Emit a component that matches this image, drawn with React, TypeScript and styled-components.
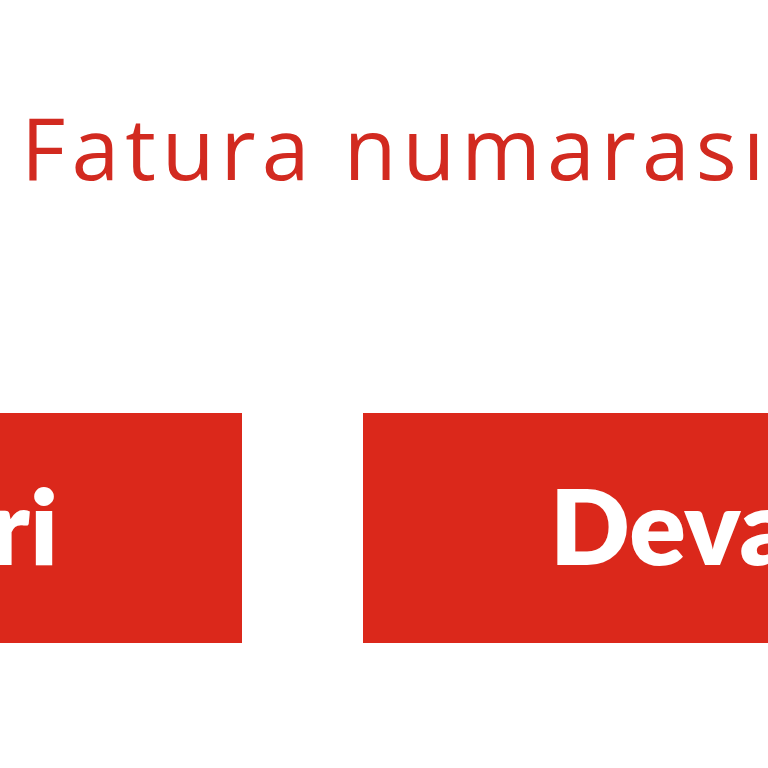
import React from 'react';
import styled, { createGlobalStyle } from 'styled-components';

const GlobalStyle = createGlobalStyle`
  html, body {
    margin: 0;
    padding: 0;
    background: #ffffff;
    overflow: hidden;
  }
`;

const Page = styled.div`
  width: 768px;
  height: 768px;
  overflow: hidden;
  display: flex;
  flex-direction: column;
`;

const Title = styled.h2`
  margin: 97px 0 0 21px;
  font-family: 'Open Sans', sans-serif;
  font-weight: 500;
  font-size: 86px;
  line-height: 100px;
  letter-spacing: 6px;
  color: #d22a20;
  white-space: nowrap;
`;

const ButtonRow = styled.div`
  display: flex;
  gap: 121px;
  margin-top: 216px;
  margin-left: -326px;
`;

const ActionButton = styled.button<{ $width: number }>`
  flex: 0 0 ${({ $width }) => $width}px;
  height: 230px;
  border: none;
  border-radius: 0;
  background: #db281b;
  color: #ffffff;
  font-family: Lato, sans-serif;
  font-weight: 800;
  font-size: 105px;
  display: flex;
  align-items: center;
  justify-content: center;
  white-space: nowrap;
  padding: 0 0 8px;
`;

const App: React.FC = () => {
  return (
    <Page>
      <GlobalStyle />
      <Title>Fatura numarasını</Title>
      <ButtonRow>
        <ActionButton $width={568}>Geri</ActionButton>
        <ActionButton $width={830}>Devam Et</ActionButton>
      </ButtonRow>
    </Page>
  );
};

export default App;
